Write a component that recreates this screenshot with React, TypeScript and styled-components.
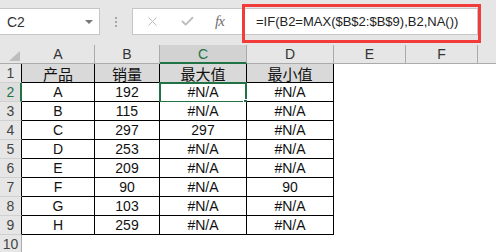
import React from "react";
import styled, { createGlobalStyle } from "styled-components";
import { X, Check } from "lucide-react";

const GlobalStyle = createGlobalStyle`
  body {
    margin: 0;
    background: #ffffff;
  }
  *, *::before, *::after {
    box-sizing: border-box;
  }
`;

const GREEN = "#217346";

const Page = styled.div`
  width: 496px;
  height: 252px;
  overflow: hidden;
  background: #ffffff;
  font-family: "Liberation Sans", Arial, "Noto Sans CJK SC", sans-serif;
`;

const Toolbar = styled.div`
  height: 45px;
  padding-top: 8px;
  background: #e6e6e6;
  display: flex;
  align-items: flex-start;
`;

const NameBox = styled.div`
  flex: none;
  width: 101px;
  height: 27px;
  margin-left: -1px;
  border: 1px solid #c6c6c6;
  background: #ffffff;
  display: flex;
  align-items: center;
  justify-content: space-between;
  padding: 0 6px 0 7px;
  font-size: 14px;
  color: #333;
`;

const Caret = styled.span`
  width: 0;
  height: 0;
  border-left: 4px solid transparent;
  border-right: 4px solid transparent;
  border-top: 4px solid #777;
`;

const Grip = styled.div`
  flex: none;
  width: 32px;
  height: 27px;
  display: flex;
  flex-direction: column;
  align-items: center;
  justify-content: center;
  gap: 2px;

  span {
    width: 2px;
    height: 2px;
    background: #a6a6a6;
  }
`;

const FormulaBar = styled.div`
  flex: none;
  width: 346px;
  height: 27px;
  border: 1px solid #c6c6c6;
  background: #ffffff;
  display: flex;
`;

const FormulaButtons = styled.div`
  flex: none;
  width: 108px;
  display: flex;
  align-items: center;
  padding-left: 12px;
  gap: 20px;
  color: #bdbdbd;
`;

const Fx = styled.span`
  font-family: "Liberation Serif", "Times New Roman", serif;
  font-style: italic;
  font-size: 15px;
  color: #6f6f6f;
  letter-spacing: -1px;
`;

const FormulaInput = styled.div`
  position: relative;
  flex: 1;
  display: flex;
  align-items: center;
  padding-left: 15px;
  font-size: 13px;
  color: #222;
  white-space: nowrap;
`;

const Highlight = styled.div`
  position: absolute;
  top: -5px;
  left: 1px;
  right: -4px;
  bottom: -9px;
  border: 3px solid #f23c3c;
  pointer-events: none;
`;

const Sheet = styled.div`
  display: grid;
  grid-template-columns: 22px 73px 65px 87px 87px 72px 72px 72px;
  grid-auto-rows: 19px;
`;

const Corner = styled.div`
  background: #e6e6e6;
  border-bottom: 1px solid #ababab;
  display: flex;
  align-items: flex-end;
  justify-content: flex-end;
  padding: 0 2px 2px 0;

  &::after {
    content: "";
    width: 0;
    height: 0;
    border-left: 11px solid transparent;
    border-bottom: 10px solid #bdbdbd;
  }
`;

const ColHeader = styled.div<{ $selected?: boolean }>`
  background: ${(p) => (p.$selected ? "#d2d2d2" : "#e6e6e6")};
  border-right: 1px solid #ababab;
  border-bottom: ${(p) =>
    p.$selected ? `2px solid ${GREEN}` : "1px solid #ababab"};
  color: ${(p) => (p.$selected ? GREEN : "#333")};
  font-size: 14px;
  display: flex;
  align-items: center;
  justify-content: center;
  padding-top: ${(p) => (p.$selected ? "1px" : "0")};
`;

const RowHeader = styled.div<{ $selected?: boolean; $edge?: string }>`
  background: ${(p) => (p.$selected ? "#dedede" : "#e6e6e6")};
  border-bottom: 1px solid #d0d0d0;
  border-right: ${(p) =>
    p.$selected ? `2px solid ${GREEN}` : `1px solid ${p.$edge || "#ababab"}`};
  color: ${(p) => (p.$selected ? GREEN : "#444")};
  font-size: 14px;
  display: flex;
  align-items: center;
  justify-content: center;
  padding-left: ${(p) => (p.$selected ? "1px" : "0")};
`;

const Cell = styled.div<{ $head?: boolean; $table?: boolean }>`
  position: relative;
  background: ${(p) => (p.$head ? "#d9d9d9" : "#ffffff")};
  border-right: ${(p) => (p.$table ? "1px solid #000" : "none")};
  border-bottom: ${(p) => (p.$table ? "1px solid #000" : "none")};
  color: #111;
  font-size: ${(p) => (p.$head ? "15px" : "14px")};
  font-family: ${(p) =>
    p.$head
      ? `"Noto Sans CJK SC", sans-serif`
      : `"Liberation Sans", Arial, sans-serif`};
  display: flex;
  align-items: center;
  justify-content: center;
  line-height: 1;
`;

const Selection = styled.div`
  position: absolute;
  top: -1px;
  left: -1px;
  right: -1px;
  bottom: -2px;
  border: 2px solid ${GREEN};
`;

const FillHandle = styled.div`
  position: absolute;
  right: -5px;
  bottom: -5px;
  width: 7px;
  height: 7px;
  background: ${GREEN};
  border: 1px solid #ffffff;
`;

// G is only a sliver at the right edge, so its letter falls outside the view
const columns = ["A", "B", "C", "D", "E", "F", ""];

const rows: string[][] = [
  ["产品", "销量", "最大值", "最小值"],
  ["A", "192", "#N/A", "#N/A"],
  ["B", "115", "#N/A", "#N/A"],
  ["C", "297", "297", "#N/A"],
  ["D", "253", "#N/A", "#N/A"],
  ["E", "209", "#N/A", "#N/A"],
  ["F", "90", "#N/A", "90"],
  ["G", "103", "#N/A", "#N/A"],
  ["H", "259", "#N/A", "#N/A"],
];

export default function App() {
  return (
    <Page>
      <GlobalStyle />
      <Toolbar>
        <NameBox>
          C2
          <Caret />
        </NameBox>
        <Grip>
          <span />
          <span />
          <span />
        </Grip>
        <FormulaBar>
          <FormulaButtons>
            <X size={15} strokeWidth={1.6} />
            <Check size={15} strokeWidth={3} />
            <Fx>fx</Fx>
          </FormulaButtons>
          <FormulaInput>
            =IF(B2=MAX($B$2:$B$9),B2,NA())
            <Highlight />
          </FormulaInput>
        </FormulaBar>
      </Toolbar>
      <Sheet>
        <Corner />
        {columns.map((c, i) => (
          <ColHeader key={i} $selected={c === "C"}>
            {c}
          </ColHeader>
        ))}
        {rows.map((r, i) => (
          <React.Fragment key={i}>
            <RowHeader $selected={i === 1} $edge="#000">
              {i + 1}
            </RowHeader>
            {r.map((v, j) => (
              <Cell key={j} $head={i === 0} $table>
                {v}
                {i === 1 && j === 2 && (
                  <Selection>
                    <FillHandle />
                  </Selection>
                )}
              </Cell>
            ))}
            <Cell />
            <Cell />
            <Cell />
          </React.Fragment>
        ))}
        <RowHeader>10</RowHeader>
      </Sheet>
    </Page>
  );
}
